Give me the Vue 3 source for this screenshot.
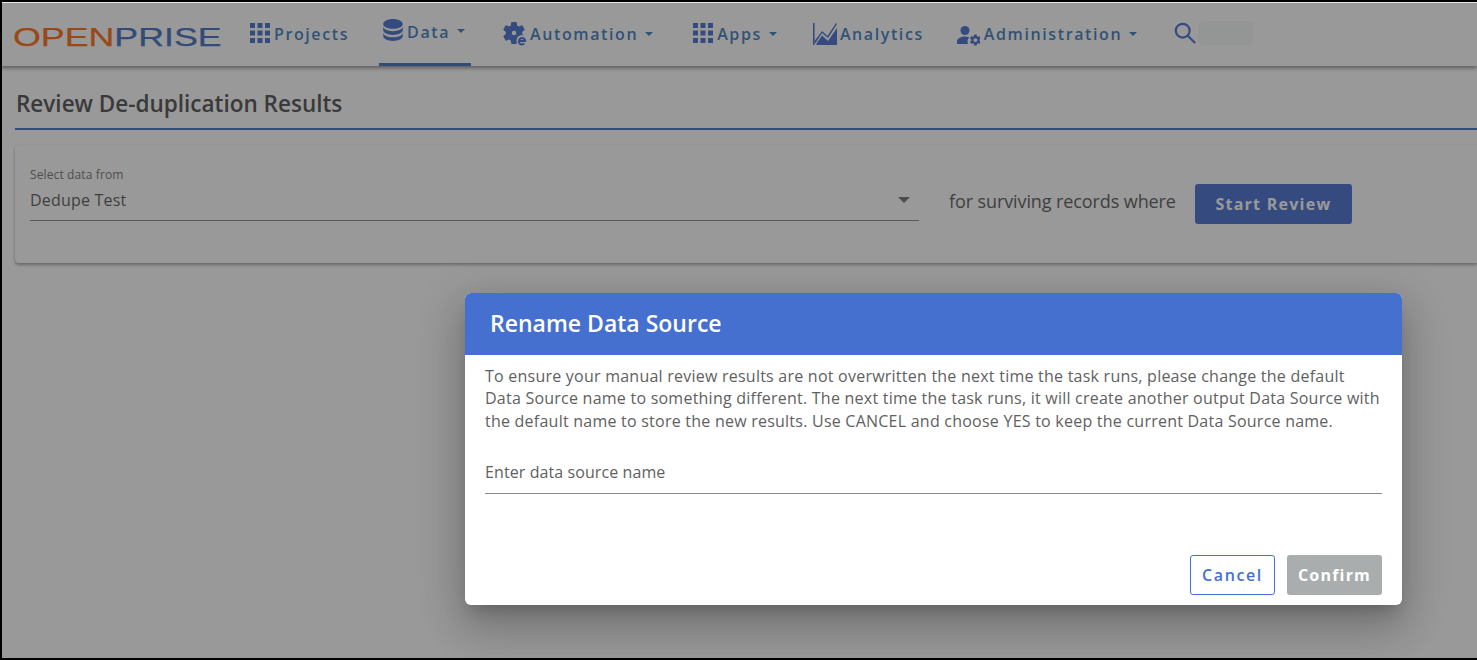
<script setup>
const GRID = 'M16,20H20V16H16M16,14H20V10H16M10,8H14V4H10M16,8H20V4H16M10,14H14V10H10M4,14H8V10H4M4,20H8V16H4M10,20H14V16H10M4,8H8V4H4V8Z'
const DB = 'M12,3C7.58,3 4,4.79 4,7C4,9.21 7.58,11 12,11C16.42,11 20,9.21 20,7C20,4.79 16.42,3 12,3M4,9V12C4,14.21 7.58,16 12,16C16.42,16 20,14.21 20,12V9C20,11.21 16.42,13 12,13C7.58,13 4,11.21 4,9M4,14V17C4,19.21 7.58,21 12,21C16.42,21 20,19.21 20,17V14C20,16.21 16.42,18 12,18C7.58,18 4,16.21 4,14Z'
const COG = 'M12,15.5A3.5,3.5 0 0,1 8.5,12A3.5,3.5 0 0,1 12,8.5A3.5,3.5 0 0,1 15.5,12A3.5,3.5 0 0,1 12,15.5M19.43,12.97C19.47,12.65 19.5,12.33 19.5,12C19.5,11.67 19.47,11.34 19.43,11L21.54,9.37C21.73,9.22 21.78,8.95 21.66,8.73L19.66,5.27C19.54,5.05 19.27,4.96 19.05,5.05L16.56,6.05C16.04,5.66 15.5,5.32 14.87,5.07L14.5,2.42C14.46,2.18 14.25,2 14,2H10C9.75,2 9.54,2.18 9.5,2.42L9.13,5.07C8.5,5.32 7.96,5.66 7.44,6.05L4.95,5.05C4.73,4.96 4.46,5.05 4.34,5.27L2.34,8.73C2.21,8.95 2.27,9.22 2.46,9.37L4.57,11C4.53,11.34 4.5,11.67 4.5,12C4.5,12.33 4.53,12.65 4.57,12.97L2.46,14.63C2.27,14.78 2.21,15.05 2.34,15.27L4.34,18.73C4.46,18.95 4.73,19.03 4.95,18.95L7.44,17.94C7.96,18.34 8.5,18.68 9.13,18.93L9.5,21.58C9.54,21.82 9.75,22 10,22H14C14.25,22 14.46,21.82 14.5,21.58L14.87,18.93C15.5,18.67 16.04,18.34 16.56,17.94L19.05,18.95C19.27,19.03 19.54,18.95 19.66,18.73L21.66,15.27C21.78,15.05 21.73,14.78 21.54,14.63L19.43,12.97Z'
</script>

<template>
  <div class="screen">
    <header class="topbar">
      <div class="logo"><span class="logo-text"><span class="orange">OPEN</span><span class="navy">PRISE</span></span></div>
      <nav class="nav">
        <a class="item projects">
          <svg class="ic-grid" viewBox="4 4 16 16"><path :d="GRID" /></svg>
          <span>Projects</span>
        </a>
        <a class="item data active">
          <svg class="ic-db" viewBox="4 3 16 18"><path :d="DB" /></svg>
          <span>Data</span><i class="caret"></i>
        </a>
        <a class="item automation">
          <svg class="ic-wide" viewBox="0 0 24 24">
            <path :d="COG" transform="translate(-2.2 -2.2) scale(1.1)" />
            <circle cx="11" cy="11" r="4.200" />
            <circle cx="11" cy="11" r="2.200" class="cut" />
            <circle cx="19" cy="18.500" r="5.500" class="cut" />
            <path d="M16 19h6.200a3.200 3.200 0 1 0 -1 2.600" class="ring" />
          </svg>
          <span>Automation</span><i class="caret"></i>
        </a>
        <a class="item apps">
          <svg class="ic-grid" viewBox="4 4 16 16"><path :d="GRID" /></svg>
          <span>Apps</span><i class="caret"></i>
        </a>
        <a class="item analytics">
          <svg class="ic-wide" viewBox="0 0 24 22">
            <path d="M0 0h1.600v22H0z" />
            <path d="M1.600 18 9 8l5.500 5L23 0l1 1-9 14-6-5-6.500 10H1.600z" />
            <path d="M3.500 20.500 9 12.500l6 5.500L24 5v17H3.500z" />
          </svg>
          <span>Analytics</span>
        </a>
        <a class="item admin">
          <svg class="ic-wide" viewBox="0 0 24 24">
            <circle cx="9" cy="8.500" r="4.500" />
            <path d="M1 22v-2.500C1 16.500 5 14.500 9 14.500c1.500 0 3 .3 4.300.8A6.500 6.500 0 0 0 12 22z" />
            <path :d="COG" transform="translate(12.800 11.500) scale(.55)" />
          </svg>
          <span>Administration</span><i class="caret"></i>
        </a>
      </nav>
      <div class="search">
        <svg class="ic-search" viewBox="0 0 24 24"><circle cx="9.500" cy="9.500" r="7.500" /><path d="M15 15l8 8" /></svg>
        <div class="search-box"></div>
      </div>
    </header>

    <main class="page">
      <h1 class="title">Review De-duplication Results</h1>
      <section class="card">
        <div class="select">
          <label>Select data from</label>
          <div class="value">Dedupe Test<i class="select-caret"></i></div>
        </div>
        <span class="where">for surviving records where</span>
        <button class="start">Start Review</button>
      </section>
    </main>

    <div class="scrim"></div>
    <div class="overlay">
      <div class="modal">
        <div class="modal-head">Rename Data Source</div>
        <div class="modal-body">
          <p>To ensure your manual review results are not overwritten the next time the task runs, please change the default Data Source name to something different. The next time the task runs, it will create another output Data Source with the default name to store the new results. Use CANCEL and choose YES to keep the current Data Source name.</p>
          <div class="field">Enter data source name</div>
          <div class="actions">
            <button class="cancel">Cancel</button>
            <button class="confirm">Confirm</button>
          </div>
        </div>
      </div>
    </div>
    <div class="frame"></div>
  </div>
</template>

<style scoped>
.screen {
  position: relative;
  width: 1477px;
  height: 660px;
  overflow: hidden;
  background: #fff;
  font-family: "Open Sans", "Noto Sans", sans-serif;
  display: flex;
  flex-direction: column;
}
.topbar {
  height: 66px;
  flex: none;
  display: flex;
  align-items: stretch;
  background: #fff;
  box-shadow: 0 2px 4px rgba(0, 0, 0, .45);
  position: relative;
}
.logo {
  width: 250px;
  flex: none;
  padding: 25px 0 0 13px;
  box-sizing: border-box;
}
.logo-text {
  display: inline-block;
  font-family: "Liberation Sans", sans-serif;
  font-size: 25px;
  line-height: 25px;
  transform: scaleX(1.43);
  transform-origin: left center;
  white-space: nowrap;
  -webkit-text-stroke: .25px currentColor;
}
.orange { color: #ff6a10; }
.navy { color: #4470c0; }
.nav {
  display: flex;
  align-items: stretch;
}
.item {
  display: flex;
  align-items: center;
  height: 66px;
  color: #3f7cc0;
  font-size: 16px;
  font-weight: 600;
  letter-spacing: 1.6px;
  white-space: nowrap;
  box-sizing: border-box;
}
.item span { margin-top: 2px; }
.item svg { fill: #4670cf; flex: none; }
.item .caret { margin-top: 1px; }
.ic-grid { width: 20px; height: 20px; margin-right: 4px; }
.ic-db { width: 20px; height: 22px; margin-right: 4px; margin-top: -4px; }
.ic-wide { width: 24px; height: 24px; margin-right: 3px; margin-top: 1px; }
.item svg .cut { fill: #fff; }
.item svg .ring { fill: none; stroke: #4670cf; stroke-width: 2; }
.caret {
  width: 0;
  height: 0;
  margin-left: 7px;
  border-left: 4px solid transparent;
  border-right: 4px solid transparent;
  border-top: 4px solid #3f7cc0;
}
.projects { margin-right: 30px; }
.data {
  width: 92px;
  padding-left: 4px;
  margin-right: 32px;
  border-bottom: 3px solid #4470c0;
}
.item.data span { margin-top: 0; }
.item.data .caret { margin-top: -2px; }
.automation { margin-right: 40px; }
.apps { margin-right: 36px; }
.analytics { margin-right: 33px; }
.admin .ic-wide { margin-left: -1px; margin-right: 4px; }
.search {
  display: flex;
  align-items: center;
  margin-left: 37px;
  height: 66px;
}
.ic-search {
  width: 22px;
  height: 22px;
  fill: none;
  stroke: #4670cf;
  stroke-width: 2.400;
  margin-top: -1px;
}
.search-box {
  width: 55px;
  height: 24px;
  margin-left: 2px;
  background: #f6f7f8;
  border-radius: 4px;
}
.page {
  flex: 1;
  padding: 0 0 0 15px;
}
.title {
  margin: 0;
  height: 64px;
  padding: 22px 0 0 1px;
  box-sizing: border-box;
  font-size: 22.500px;
  line-height: 32px;
  font-weight: 600;
  color: #505050;
  border-bottom: 2px solid #4470c0;
}
.card {
  margin-top: 15px;
  height: 118px;
  padding: 0 0 0 15px;
  box-sizing: border-box;
  border-radius: 4px 0 0 4px;
  background: #fff;
  box-shadow: 0 2px 3px rgba(0, 0, 0, .35), 0 0 2px rgba(0, 0, 0, .06);
  display: flex;
  align-items: flex-start;
}
.select {
  width: 889px;
  flex: none;
  padding-top: 22px;
}
.select label {
  display: block;
  font-size: 12px;
  line-height: 15px;
  letter-spacing: .12px;
  color: #757575;
}
.value {
  display: flex;
  align-items: center;
  justify-content: space-between;
  height: 38px;
  margin-top: 1px;
  font-size: 16px;
  letter-spacing: .2px;
  color: #5a5a5a;
  border-bottom: 1px solid #8a8a8a;
  padding: 0 9px 4px 0;
  box-sizing: border-box;
}
.select-caret {
  width: 0;
  height: 0;
  border-left: 6.500px solid transparent;
  border-right: 6.500px solid transparent;
  border-top: 6.500px solid #757575;
}
.where {
  margin: 41px 0 0 30px;
  font-size: 18px;
  line-height: 30px;
  color: #5a5a5a;
  white-space: nowrap;
  letter-spacing: -.1px;
}
.start {
  margin: 39px 0 0 19px;
  width: 157px;
  height: 40px;
  border: 0;
  border-radius: 3px;
  background: #4670cf;
  color: #fff;
  font: 700 16px "Open Sans", sans-serif;
  letter-spacing: 1.250px;
}
.scrim {
  position: absolute;
  inset: 0;
  background: rgba(33, 33, 33, .46);
}
.overlay {
  position: absolute;
  inset: 0;
  padding: 293px 0 0 465px;
}
.modal {
  width: 937px;
  height: 312px;
  background: #fff;
  border-radius: 6px;
  overflow: hidden;
  box-shadow: 0 11px 15px -7px rgba(0,0,0,.2), 0 24px 38px 3px rgba(0,0,0,.14), 0 9px 46px 8px rgba(0,0,0,.12);
}
.modal-head {
  height: 62px;
  background: #4670cf;
  color: #fff;
  font-size: 23px;
  font-weight: 600;
  line-height: 60px;
  padding-left: 25px;
}
.modal-body {
  padding: 10px 20px 0;
  color: #616161;
}
.modal-body p {
  margin: 0;
  font-size: 16px;
  line-height: 22.400px;
  letter-spacing: .235px;
}
.field {
  margin-top: 18px;
  height: 44px;
  line-height: 43px;
  font-size: 16px;
  letter-spacing: .09px;
  border-bottom: 1px solid #8a8a8a;
  box-sizing: border-box;
  padding-top: 1px;
}
.actions {
  display: flex;
  justify-content: flex-end;
  gap: 12px;
  margin-top: 61px;
}
.actions button {
  height: 40px;
  border-radius: 3px;
  box-sizing: border-box;
}
.cancel {
  width: 85px;
  background: #fff;
  color: #4670cf;
  border: 1px solid #4670cf;
  font: 600 16px "Open Sans", sans-serif;
  letter-spacing: 1.600px;
}
.confirm {
  width: 95px;
  border: 0;
  background: #a9adad;
  color: #fff;
  font: 700 16px "Open Sans", sans-serif;
  letter-spacing: 1.200px;
}
.frame {
  position: absolute;
  inset: 0;
  border-left: 2px solid #000;
  border-top: 2px solid #000;
  border-bottom: 2px solid #000;
  pointer-events: none;
}
.frame::before {
  content: "";
  position: absolute;
  left: 0;
  right: 0;
  top: 0;
  height: 1px;
  background: #e8e8e8;
}
</style>
<style>
body { margin: 0; }
</style>
